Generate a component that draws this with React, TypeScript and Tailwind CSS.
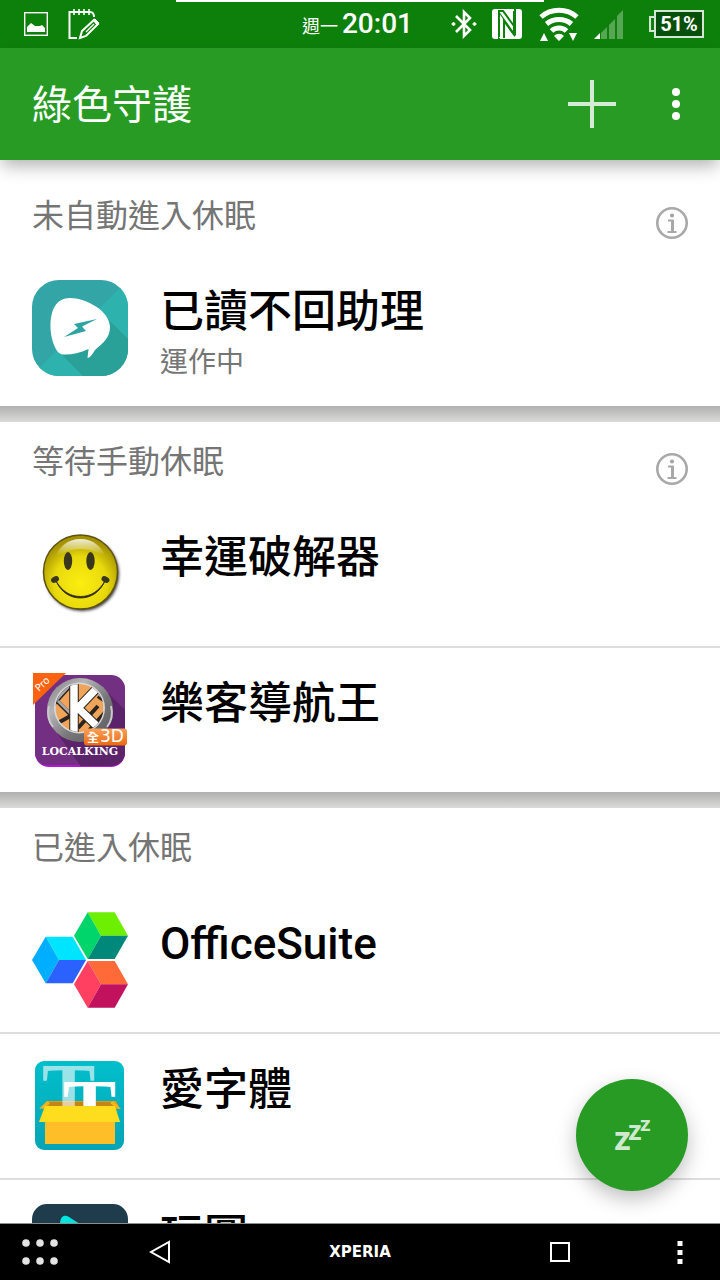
import React from 'react';

const ReadHelperIcon = () => (
  <svg viewBox="0 0 96 96" className="w-24 h-24 shrink-0">
    <defs>
      <clipPath id="readClip">
        <rect width="96" height="96" rx="27" />
      </clipPath>
    </defs>
    <g clipPath="url(#readClip)">
      <rect width="96" height="96" fill="#33a5a7" />
      <path d="M96 0 0 95v1h96z" fill="#2db2ad" />
      <path d="M76 39 96 59v37H51L30 75z" fill="#2aa198" />
    </g>
    <path
      d="M18.500 47C18.500 30 24 18 38 18c16 0 40 13 40 29 0 11-8 17-14 22-3 3-5 9-8.500 9l1-9c-9 4-18 6-25.500 5.500C23 74 18.500 57 18.500 47z"
      fill="#fff"
    />
    <path d="M65 39 42 44l4 4-14 9 22-6-4-4.500z" fill="#2fa3a1" />
  </svg>
);

const SmileyIcon = () => (
  <svg viewBox="0 0 96 96" className="w-24 h-24 shrink-0">
    <defs>
      <radialGradient id="smileFace" cx="0.5" cy="0.65" r="0.6">
        <stop offset="0" stopColor="#fcee10" />
        <stop offset="0.6" stopColor="#e8d90c" />
        <stop offset="1" stopColor="#a39100" />
      </radialGradient>
      <linearGradient id="smileShine" x1="0" y1="0" x2="0" y2="1">
        <stop offset="0" stopColor="#fff" stopOpacity="0.85" />
        <stop offset="0.7" stopColor="#fff" stopOpacity="0" />
      </linearGradient>
      <filter id="smileShadow" x="-20%" y="-20%" width="140%" height="140%">
        <feGaussianBlur stdDeviation="1.5" />
      </filter>
    </defs>
    <circle cx="50" cy="48" r="37" fill="#333" filter="url(#smileShadow)" />
    <circle cx="48.500" cy="46" r="37" fill="url(#smileFace)" stroke="#5e5410" strokeWidth="1.500" />
    <path
      d="M22 36C25 21 36 13 48.500 13S72 21 75 36c-4-8-14-13-26.500-13S26 28 22 36z"
      fill="url(#smileShine)"
    />
    <ellipse cx="36" cy="35" rx="4.200" ry="9" fill="#38361c" />
    <ellipse cx="58.500" cy="35" rx="4.200" ry="9" fill="#38361c" />
    <path d="M24 55c5 11 14 17 24.500 17S68 66 73 55c-6 10-14 15.500-24.500 15.500S30 65 24 55z" fill="#2d2a10" stroke="#2d2a10" strokeWidth="0.800" />
    <ellipse cx="23" cy="53.500" rx="4.200" ry="3" fill="#38361c" transform="rotate(-30 23 53.500)" />
    <ellipse cx="73.500" cy="53.500" rx="4.200" ry="3" fill="#38361c" transform="rotate(30 73.500 53.500)" />
  </svg>
);

const LocalKingIcon = () => (
  <svg viewBox="0 0 96 96" className="w-24 h-24 shrink-0">
    <defs>
      <linearGradient id="kingRing" x1="0" y1="0" x2="1" y2="1">
        <stop offset="0" stopColor="#77777a" />
        <stop offset="0.3" stopColor="#b5b5b8" />
        <stop offset="0.6" stopColor="#77777a" />
        <stop offset="1" stopColor="#58585c" />
      </linearGradient>
      <linearGradient id="kingBadge" x1="0" y1="0" x2="0" y2="1">
        <stop offset="0" stopColor="#f9a058" />
        <stop offset="1" stopColor="#e96a10" />
      </linearGradient>
      <clipPath id="kingBody">
        <rect x="3" y="3" width="90" height="91" rx="14" />
      </clipPath>
      <clipPath id="kingMap">
        <circle cx="47.500" cy="36" r="24" />
      </clipPath>
    </defs>
    <rect x="3" y="4" width="90" height="91" rx="14" fill="#b416d2" />
    <g clipPath="url(#kingBody)">
      <rect x="3" y="3" width="90" height="90" fill="#732f82" />
      <path d="m70 15 26 26v55H50L20 54z" fill="#5b2369" />
    </g>
    <ellipse cx="48" cy="38" rx="33" ry="32" fill="url(#kingRing)" />
    <path d="M17 34c-2 8 0 16 4 21M79 34c2 8 0 16-4 21" fill="none" stroke="#c9c9cc" strokeWidth="2" />
    <circle cx="47.500" cy="36" r="25.500" fill="#d6d6d8" />
    <g clipPath="url(#kingMap)">
      <circle cx="47.500" cy="36" r="24" fill="#f0a45a" />
      <path d="M20 34 40 12M26 30l16 16M54 62l24-27M46 56l20-22M66 24l14 10M24 52l18-10" stroke="#2a2420" strokeWidth="4" />
      <path d="M20 33 40 11M26 29l16 16M66 22l14 10" stroke="#a7a7aa" strokeWidth="2.500" />
      <path d="M42 10v54M69 12 46 36l26 25" fill="none" stroke="#2a2420" strokeWidth="9.500" />
      <path d="M42 10v54M69 12 46 36l26 25" fill="none" stroke="#fff" strokeWidth="7.500" />
    </g>
    <path d="M1 1h33L1 33z" fill="#fb6311" />
    <text x="7" y="20" fontSize="10" fill="#fff" fontFamily="DejaVu Sans, sans-serif" transform="rotate(-44 7 20)">
      Pro
    </text>
    <rect x="52" y="56.500" width="43" height="17" rx="3" fill="url(#kingBadge)" />
    <text x="55" y="69.500" fontSize="12" fontWeight="700" fill="#fff" fontFamily="Noto Sans CJK TC, sans-serif">
      全
    </text>
    <text x="68" y="70" fontSize="17" fill="#fff" fontFamily="DejaVu Sans, sans-serif">
      3D
    </text>
    <text x="48" y="83" fontSize="11" fontWeight="700" fill="#fff" textAnchor="middle" fontFamily="DejaVu Serif, serif">
      LOCALKING
    </text>
  </svg>
);

const OfficeIcon = () => (
  <svg viewBox="0 0 96 96" className="w-24 h-24 shrink-0">
    <path d="M55.700.3h27L96 23.700H69z" fill="#6cef00" />
    <path d="M55.700.3 69 23.700 55.700 47 42 23.700z" fill="#00d56b" />
    <path d="M69 23.700h27L82.700 47h-27z" fill="#00897a" />
    <path d="M13.700 24.700h27L54 48H27z" fill="#00e5ff" />
    <path d="M13.700 24.700 27 48 13.700 71.300 0 48z" fill="#00aeff" />
    <path d="M27 48h27L40.700 71.300h-27z" fill="#2b62ff" />
    <path d="M55.700 49h27L96 72.300H69z" fill="#ff6a38" />
    <path d="M55.700 49 69 72.300 55.700 95.700 42 72.300z" fill="#ff4061" />
    <path d="M69 72.300h27L82.700 95.700h-27z" fill="#c2115d" />
  </svg>
);

const FontIcon = () => (
  <svg viewBox="0 0 96 96" className="w-24 h-24 shrink-0">
    <defs>
      <linearGradient id="fontBg" x1="0" y1="0" x2="0" y2="1">
        <stop offset="0" stopColor="#02bfcb" />
        <stop offset="1" stopColor="#06a4b6" />
      </linearGradient>
    </defs>
    <rect x="3" y="3" width="89" height="89" rx="9" fill="url(#fontBg)" />
    <path d="M15 43h69l4 8H10z" fill="#e39a12" />
    <path d="M17 44h65v6H17z" fill="#c58514" />
    <path d="m15 43-8 8 5-1 6-5zM81 43l8 8-5-1-6-5z" fill="#f6b51c" />
    <g fontFamily="Liberation Serif, serif" fontWeight="700" fontSize="80" fill="#fff">
      <text x="10" y="61" opacity="0.6">
        T
      </text>
      <text x="31" y="77">
        T
      </text>
    </g>
    <path d="M13 60h70v26H13z" fill="#fdbe27" />
    <path d="M13 48h70l5 16H7z" fill="#fddd1d" />
  </svg>
);

const PlayIcon = () => (
  <svg viewBox="0 0 96 96" className="w-24 h-24 shrink-0">
    <rect width="96" height="96" rx="15" fill="#1f3c4d" />
    <path d="M28 20c0-7 4-10 9-7l34 22c4 3 4 8 0 11L37 68c-5 3-9 0-9-5z" fill="#00e5de" />
  </svg>
);

const sections = [
  {
    id: 1,
    title: '未自動進入休眠',
    hasInfo: true,
    apps: [{ name: '已讀不回助理', status: '運作中', icon: <ReadHelperIcon /> }],
  },
  {
    id: 2,
    title: '等待手動休眠',
    hasInfo: true,
    apps: [
      { name: '幸運破解器', status: '', icon: <SmileyIcon /> },
      { name: '樂客導航王', status: '', icon: <LocalKingIcon /> },
    ],
  },
  {
    id: 3,
    title: '已進入休眠',
    hasInfo: false,
    apps: [
      { name: 'OfficeSuite', status: '', icon: <OfficeIcon /> },
      { name: '愛字體', status: '', icon: <FontIcon /> },
      { name: '玩圖', status: '', icon: <PlayIcon /> },
    ],
  },
];

const StatusBar = () => (
  <div className="relative flex items-center justify-between h-12 shrink-0 pl-6 pr-4 bg-[#0d800b] text-white">
    {/* loading line along the top edge */}
    <div className="absolute top-0 inset-x-0 mx-auto w-[51%] h-[2px] bg-white"></div>
    <div className="flex items-center gap-5">
      <svg viewBox="0 0 24 24" className="w-6 h-6">
        <rect x="0.700" y="0.700" width="22.600" height="22.600" fill="none" stroke="#fff" strokeWidth="1.400" />
        <path d="M3 20v-5l4-4 4 3h5l2-1 3 3v4z" fill="#fff" />
      </svg>
      <svg viewBox="0 0 32 32" className="w-8 h-8" fill="none" stroke="#fff">
        <path d="M9 30H1.500V4H22c3 0 4 2 4 5" strokeWidth="2" />
        <path d="M6 1v6M11 1v6M16 1v6M21 1v6" strokeWidth="1.600" />
        <path d="m14 23 12-11 4 4-12 12-6 2z" strokeWidth="2" />
        <path d="m18 24 8-8" strokeWidth="1.200" />
        <path d="m25 12 2-1 4 4-2 2z" fill="#fff" />
      </svg>
    </div>
    <div className="flex items-center">
      <div className="flex items-baseline gap-1 mr-9.5">
        <span className="text-lg">週一</span>
        <span className="text-[28px] font-medium">20:01</span>
      </div>
      <svg viewBox="0 0 26 30" className="w-[26px] h-[30px] mr-3.5" fill="none" stroke="#fff" strokeWidth="2.600">
        <path d="m5 7 14 14-6 6V3l6 6L5 23" />
        <path d="m2.500 13 2 2-2 2-2-2zM23.500 13l2 2-2 2-2-2z" fill="#fff" strokeWidth="0.500" />
      </svg>
      <svg viewBox="0 0 32 32" className="w-8 h-8 mr-4">
        <path d="M4 1h24c2 0 3 1 3 3v24c0 2-1 3-3 3H4c-2 0-3-1-3-3V4c0-2 1-3 3-3z" fill="#fff" />
        <path d="M8 31V5M8 5l15 21V14" fill="none" stroke="#0d800b" strokeWidth="2" />
        <path d="M24 1v26" fill="none" stroke="#0d800b" strokeWidth="2" />
        <path d="M12 29V11l-4-6v25z" fill="#fff" />
        <path d="M13 30V13l11 15M8 29V3h4l11 15V3" fill="none" stroke="#0d800b" strokeWidth="2" />
      </svg>
      <svg viewBox="0 0 40 34" className="w-10 h-[34px] mr-3.5" fill="none" stroke="#fff" strokeWidth="5">
        <path d="M2 10c10-9 26-9 36 0M7.500 17c7-6 18-6 25 0M12.500 24c4-4 11-4 15 0" />
        <path d="m15 29 5 5 5-5c-3-3-7-3-10 0zM5 26l4 8H1zM30 26h8l-4 8z" fill="#fff" stroke="none" />
      </svg>
      <svg viewBox="0 0 32 32" className="w-8 h-8 mr-6">
        <path d="M8 25v6h6V19zM16 17v14h6V11zM24 8v23h6V2z" fill="#fff" opacity="0.3" />
        <path d="M1 31h6v-6z" fill="#fff" />
      </svg>
      <div className="flex items-center">
        <span className="w-[5px] h-4 border-2 border-r-0 border-[#d5e6d4]"></span>
        <span className="flex items-center justify-center w-[50px] h-7 border-2 border-[#d5e6d4] bg-[#06500a] text-xl font-bold">
          51%
        </span>
      </div>
    </div>
  </div>
);

const InfoButton = () => (
  <button type="button" aria-label="info" className="mt-3.5">
    <svg viewBox="0 0 32 32" className="w-8 h-8" fill="none" stroke="#a8a8a8">
      <circle cx="16" cy="16" r="14.700" strokeWidth="2.600" />
      <path d="M12 13.500h4.500V25M11.500 25h9" strokeWidth="2" />
      <path d="M16.500 13v12" strokeWidth="3" />
      <circle cx="16" cy="8.500" r="2" fill="#a0a0a0" stroke="none" />
    </svg>
  </button>
);

const App = () => {
  return (
    <div className="flex flex-col h-screen bg-white font-[Roboto,'Noto_Sans_CJK_TC',sans-serif]">
      <StatusBar />
      <header className="relative z-10 flex items-center justify-between h-28 shrink-0 px-8 bg-[#279b24] text-white shadow-[0_8px_16px_-2px_rgba(0,0,0,0.3)]">
        <h1 className="pt-1 text-[40px]">綠色守護</h1>
        <div className="flex items-center gap-12">
          <button type="button" aria-label="add">
            <svg viewBox="0 0 48 48" className="w-12 h-12" stroke="#d4ebd3" strokeWidth="4">
              <path d="M24 0v48M0 24h48" />
            </svg>
          </button>
          <button type="button" aria-label="more">
            <svg viewBox="0 0 24 48" className="w-6 h-12" fill="#fff">
              <circle cx="12" cy="12" r="4" />
              <circle cx="12" cy="24" r="4" />
              <circle cx="12" cy="36" r="4" />
            </svg>
          </button>
        </div>
      </header>

      <main className="relative flex-1 min-h-0 overflow-hidden pt-4">
        {sections.map((section) => (
          <section key={section.id}>
            {section.id > 1 && (
              <div className="h-4 bg-linear-to-b from-[#b0b0ae] to-[#dbdbda]"></div>
            )}
            <div className="flex items-center justify-between h-20 px-8">
              <h2 className="text-[32px] text-[#757575]">{section.title}</h2>
              {section.hasInfo && <InfoButton />}
            </div>
            <ul className="divide-y-2 divide-[#dedede]">
              {section.apps.map((app) => (
                <li key={app.name} className="flex items-start gap-8 px-8 py-6">
                  {app.icon}
                  <div>
                    <p className="text-[44px] leading-[64px] font-medium text-black">{app.name}</p>
                    {app.status && (
                      <p className="text-[28px] leading-[38px] text-[#757575]">{app.status}</p>
                    )}
                  </div>
                </li>
              ))}
            </ul>
          </section>
        ))}
        {/* 休眠 */}
        <button
          type="button"
          aria-label="zzz"
          className="absolute right-8 bottom-8 w-28 h-28 rounded-full bg-[#279b24] shadow-[0_8px_20px_rgba(0,0,0,0.25)]"
        >
          <svg viewBox="0 0 112 112" className="w-28 h-28" fill="#cfe9ce" fontFamily="Roboto, sans-serif" fontWeight="700">
            <text x="38" y="71" fontSize="33">z</text>
            <text x="52" y="61" fontSize="27">z</text>
            <text x="64" y="52" fontSize="21">z</text>
          </svg>
        </button>
      </main>

      <nav className="grid grid-cols-[1fr_2fr_3fr_2fr_1fr] items-center justify-items-center h-[57px] shrink-0 border-t border-[#8a8f8f] bg-black text-white">
        <button type="button" aria-label="apps">
          <svg viewBox="0 0 36 26" className="w-9 h-[26px]" fill="#e4e4e4">
            <circle cx="4" cy="4" r="3.800" />
            <circle cx="18" cy="4" r="3.800" />
            <circle cx="32" cy="4" r="3.800" />
            <circle cx="4" cy="22" r="3.800" />
            <circle cx="18" cy="22" r="3.800" />
            <circle cx="32" cy="22" r="3.800" />
          </svg>
        </button>
        <button type="button" aria-label="back">
          <svg viewBox="0 0 22 24" className="w-[22px] h-6" fill="none" stroke="#fff" strokeWidth="2">
            <path d="M20 2v20L2 12z" />
          </svg>
        </button>
        <span className="text-[15px] font-bold font-['DejaVu_Sans',sans-serif]">XPERIA</span>
        <button type="button" aria-label="home">
          <svg viewBox="0 0 20 20" className="w-5 h-5" fill="none" stroke="#fff" strokeWidth="2">
            <rect x="1" y="1" width="18" height="18" />
          </svg>
        </button>
        <button type="button" aria-label="menu">
          <svg viewBox="0 0 6 24" className="w-[6px] h-6" fill="#fff">
            <path d="M.5 1h5v5h-5zM.5 10h5v5h-5zM.5 19h5v5h-5z" />
          </svg>
        </button>
      </nav>
    </div>
  );
};

export default App;
